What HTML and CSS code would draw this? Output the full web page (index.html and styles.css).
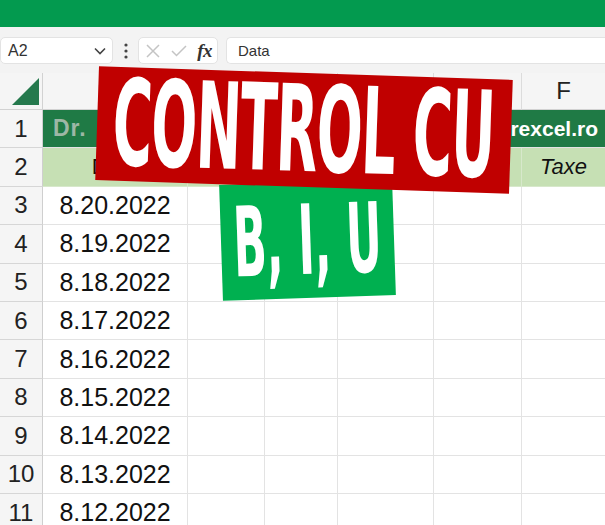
FILE: index.html
```html
<!DOCTYPE html>
<html>
<head>
<meta charset="utf-8">
<link rel="stylesheet" href="styles.css">
</head>
<body>
<div class="titlebar"></div>
<div class="formulabar">
  <div class="namebox">
    <span class="ref">A2</span>
    <svg class="chev" width="12" height="8" viewBox="0 0 12 8"><path d="M1 1.5 L6 6.5 L11 1.5" fill="none" stroke="#444" stroke-width="1.6"/></svg>
  </div>
  <div class="dots">
    <svg width="4" height="16" viewBox="0 0 4 16"><circle cx="2" cy="2" r="1.6" fill="#444"/><circle cx="2" cy="8" r="1.6" fill="#444"/><circle cx="2" cy="14" r="1.6" fill="#444"/></svg>
  </div>
  <div class="fxbox">
    <svg width="14" height="14" viewBox="0 0 14 14"><path d="M1 1 L13 13 M13 1 L1 13" stroke="#c4c4c4" stroke-width="1.5" fill="none"/></svg>
    <svg width="16" height="12" viewBox="0 0 16 12"><path d="M1 6 L5.5 10.5 L15 1" stroke="#c4c4c4" stroke-width="1.5" fill="none"/></svg>
    <span class="fx">fx</span>
  </div>
  <div class="input">Data</div>
</div>

<div class="sheet">
  <div class="corner"><span class="tri"></span></div>
  <div class="colh">A</div><div class="colh">B</div><div class="colh">C</div><div class="colh">D</div><div class="colh">E</div><div class="colh">F</div>

  <div class="rowh">1</div>
  <div class="title"><span class="dim">Dr. Excel</span><span>www.drexcel.ro</span></div>

  <div class="rowh">2</div>
  <div class="cell hdr">Data</div><div class="cell hdr"></div><div class="cell hdr"></div><div class="cell hdr"></div><div class="cell hdr"></div><div class="cell hdr it">Taxe</div>

  <div class="rowh">3</div><div class="cell date">8.20.2022</div><div class="cell"></div><div class="cell"></div><div class="cell"></div><div class="cell"></div><div class="cell"></div>
  <div class="rowh">4</div><div class="cell date">8.19.2022</div><div class="cell"></div><div class="cell"></div><div class="cell"></div><div class="cell"></div><div class="cell"></div>
  <div class="rowh">5</div><div class="cell date">8.18.2022</div><div class="cell"></div><div class="cell"></div><div class="cell"></div><div class="cell"></div><div class="cell"></div>
  <div class="rowh">6</div><div class="cell date">8.17.2022</div><div class="cell"></div><div class="cell"></div><div class="cell"></div><div class="cell"></div><div class="cell"></div>
  <div class="rowh">7</div><div class="cell date">8.16.2022</div><div class="cell"></div><div class="cell"></div><div class="cell"></div><div class="cell"></div><div class="cell"></div>
  <div class="rowh">8</div><div class="cell date">8.15.2022</div><div class="cell"></div><div class="cell"></div><div class="cell"></div><div class="cell"></div><div class="cell"></div>
  <div class="rowh">9</div><div class="cell date">8.14.2022</div><div class="cell"></div><div class="cell"></div><div class="cell"></div><div class="cell"></div><div class="cell"></div>
  <div class="rowh">10</div><div class="cell date">8.13.2022</div><div class="cell"></div><div class="cell"></div><div class="cell"></div><div class="cell"></div><div class="cell"></div>
  <div class="rowh">11</div><div class="cell date">8.12.2022</div><div class="cell"></div><div class="cell"></div><div class="cell"></div><div class="cell"></div><div class="cell"></div>
</div>

<div class="badge green"><span class="big">B, I, U</span></div>
<div class="badge red"><span class="big">CONTROL CU</span></div>
</body>
</html>
```

FILE: styles.css
```css
html, body {
  margin: 0;
  padding: 0;
  width: 605px;
  height: 525px;
  overflow: hidden;
  background: #ffffff;
  font-family: "Liberation Sans", Arial, sans-serif;
}
body { position: relative; }

.titlebar {
  height: 27px;
  background: #039a4f;
}

.formulabar {
  height: 46px;
  box-sizing: border-box;
  padding-top: 10px;
  background: #f3f3f3;
  display: flex;
  align-items: flex-start;
}
.namebox, .fxbox, .input {
  height: 27px;
  box-sizing: border-box;
  background: #ffffff;
  border: 1px solid #e3e3e3;
  border-radius: 5px;
  display: flex;
  align-items: center;
}
.namebox {
  width: 113px;
  padding: 0 6px 0 7px;
  justify-content: space-between;
  color: #333;
  font-size: 16px;
}
.dots {
  width: 25px;
  height: 27px;
  display: flex;
  align-items: center;
  justify-content: center;
}
.fxbox {
  width: 80px;
  padding: 0 5px 0 7px;
  justify-content: space-between;
}
.fx {
  font-family: "Liberation Serif", serif;
  font-style: italic;
  font-weight: bold;
  font-size: 19px;
  color: #333;
  letter-spacing: -0.5px;
}
.input {
  margin-left: 8px;
  flex: 1;
  padding-left: 11px;
  font-size: 15px;
  color: #333;
  border-right: none;
  border-radius: 5px 0 0 5px;
}

.sheet {
  display: grid;
  grid-template-columns: 43px 145px 77px 73px 96px 88px 84px;
  grid-template-rows: 37px repeat(11, 38.4px);
}
.corner, .colh, .rowh {
  background: #f5f5f5;
  box-sizing: border-box;
  color: #222;
  font-size: 24px;
  display: flex;
  align-items: center;
  justify-content: center;
}
.corner {
  border-right: 1px solid #d2d2d2;
  border-bottom: 1px solid #d2d2d2;
  position: relative;
}
.tri {
  position: absolute;
  right: 3px;
  bottom: 4px;
  width: 0;
  height: 0;
  border-left: 27px solid transparent;
  border-bottom: 27px solid #25794d;
}
.colh {
  border-right: 1px solid #dcdcdc;
  border-bottom: 1px solid #d2d2d2;
}
.rowh {
  border-right: 1px solid #cfcfcf;
  border-bottom: 1px solid #d6d6d6;
}
.cell {
  box-sizing: border-box;
  border-right: 1px solid #e3e3e3;
  border-bottom: 1px solid #e3e3e3;
  display: flex;
  align-items: center;
  justify-content: center;
  font-size: 25px;
  color: #111;
}
.title {
  grid-column: 2 / 8;
  background: #1f7a45;
  color: #ffffff;
  font-weight: bold;
  font-size: 21px;
  display: flex;
  align-items: center;
  justify-content: space-between;
  padding: 0 8px 0 10px;
  border-bottom: 1px solid #e3e3e3;
}
.title .dim {
  color: #9db7a5;
  font-size: 23px;
  letter-spacing: 1px;
  word-spacing: 14px;
}
.hdr {
  background: #c6e0b4;
  border-color: #d7e8cb;
  font-size: 22px;
}
.it { font-style: italic; }

.badge {
  position: absolute;
  display: flex;
  align-items: center;
  justify-content: center;
  color: #ffffff;
  overflow: visible;
}
.big {
  display: inline-block;
  font-family: "DejaVu Sans Condensed", "DejaVu Sans", sans-serif;
  font-weight: bold;
  white-space: nowrap;
  line-height: 1;
  transform: scaleX(0.5);
  transform-origin: center;
}
.red {
  left: 97px;
  top: 73px;
  width: 414px;
  height: 114px;
  background: #c00000;
  transform: rotate(1.9deg);
}
.red .big { font-size: 120px; letter-spacing: -2px; }
.green {
  left: 221px;
  top: 182px;
  width: 173px;
  height: 116px;
  background: #00b050;
  transform: rotate(-1.9deg);
}
.green .big { font-size: 97px; }
```
